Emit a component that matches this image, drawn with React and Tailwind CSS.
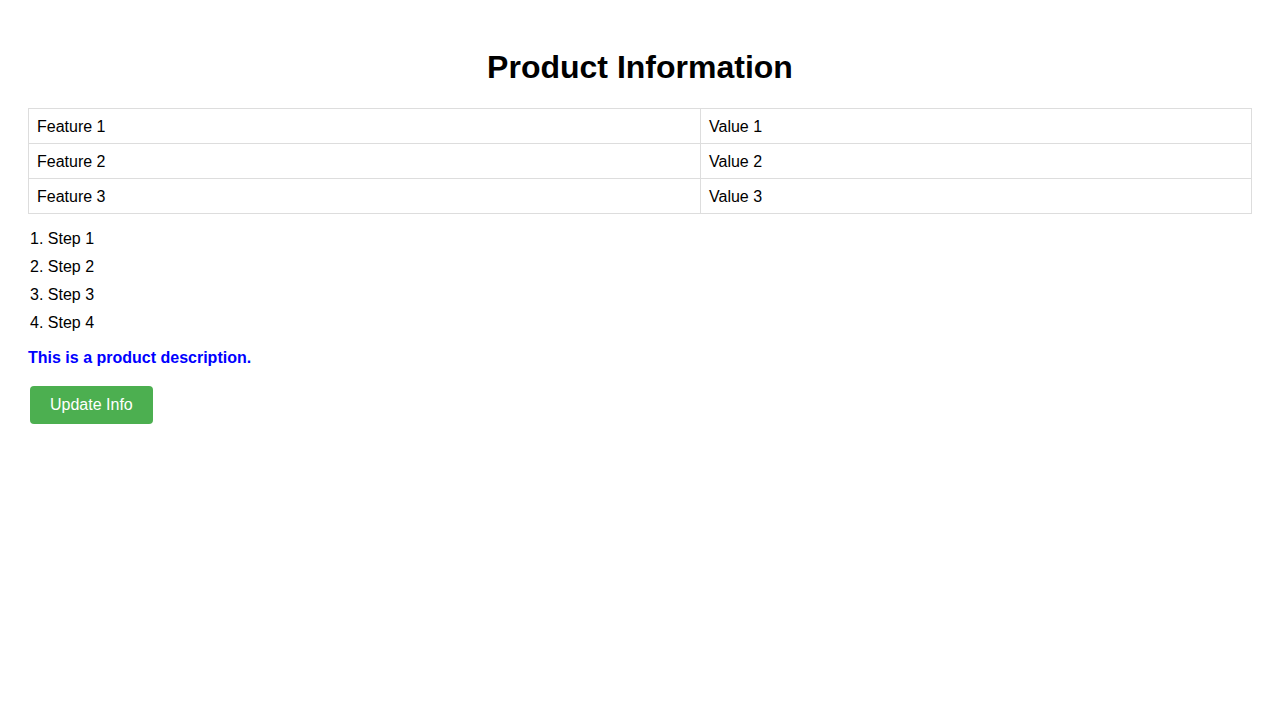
export default function App() {
  const rows = [
    ["Feature 1", "Value 1"],
    ["Feature 2", "Value 2"],
    ["Feature 3", "Value 3"],
  ];
  return (
    <div className="min-h-screen bg-white px-[28px] text-black" style={{ fontFamily: '"Liberation Sans", Arial, sans-serif' }}>
      <h1 className="pt-[49px] text-center text-[32px] font-bold leading-[37px]">Product Information</h1>
      <table className="mt-[22px] w-full border-collapse text-[16px]">
        <tbody>
          {rows.map(([a, b]) => (
            <tr key={a}>
              <td className="w-[672px] border border-[#dddddd] px-[8px] pt-[9px] pb-[7px] align-top leading-[18px]">{a}</td>
              <td className="border border-[#dddddd] px-[8px] pt-[9px] pb-[7px] align-top leading-[18px]">{b}</td>
            </tr>
          ))}
        </tbody>
      </table>
      <ol className="mt-[11px] list-decimal list-inside pl-[2px] text-[16px]">
        {["Step 1", "Step 2", "Step 3", "Step 4"].map((s) => (
          <li key={s} className="h-[28px] leading-[28px]">{s}</li>
        ))}
      </ol>
      <p className="mt-[12px] text-[16px] font-bold leading-[18px] text-[#0000ff]">This is a product description.</p>
      <button className="ml-[2px] mt-[19px] h-[38px] rounded-[4px] bg-[#4caf50] px-[20px] text-[16px] text-white">Update Info</button>
    </div>
  );
}
